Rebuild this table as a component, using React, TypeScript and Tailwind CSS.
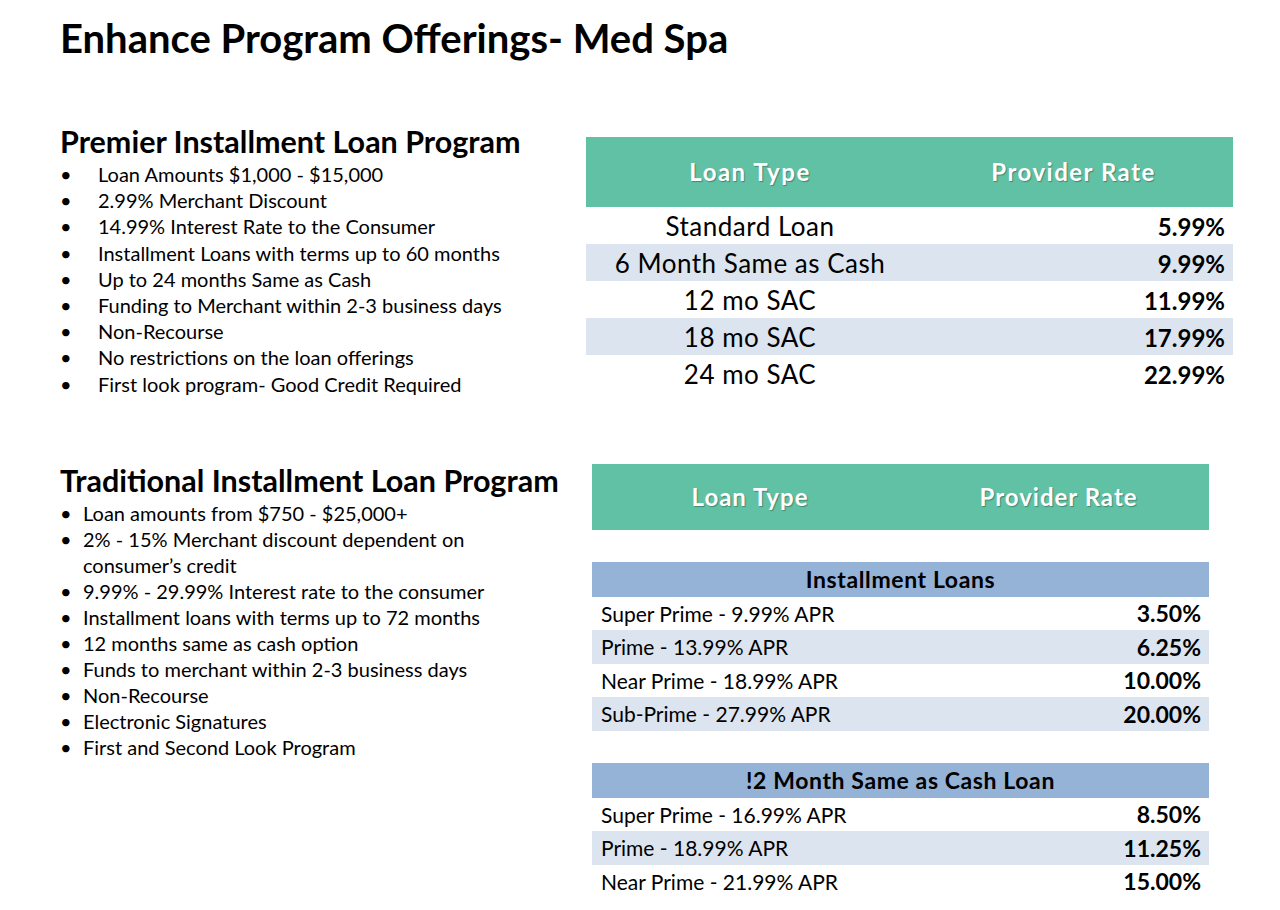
const premier = [
  "Loan Amounts $1,000 - $15,000",
  "2.99% Merchant Discount",
  "14.99% Interest Rate to the Consumer",
  "Installment Loans with terms up to 60 months",
  "Up to 24 months Same as Cash",
  "Funding to Merchant within 2-3 business days",
  "Non-Recourse",
  "No restrictions on the loan offerings",
  "First look program- Good Credit Required",
];

const traditional = [
  "Loan amounts from $750 - $25,000+",
  "2% - 15% Merchant discount dependent on consumer\u2019s credit",
  "9.99% - 29.99% Interest rate to the consumer",
  "Installment loans with terms up to 72 months",
  "12 months same as cash option",
  "Funds to merchant within 2-3 business days",
  "Non-Recourse",
  "Electronic Signatures",
  "First and Second Look Program",
];

const premierRates = [
  ["Standard Loan", "5.99%"],
  ["6 Month Same as Cash", "9.99%"],
  ["12 mo SAC", "11.99%"],
  ["18 mo SAC", "17.99%"],
  ["24 mo SAC", "22.99%"],
];

const installment = [
  ["Super Prime - 9.99% APR", "3.50%"],
  ["Prime - 13.99% APR", "6.25%"],
  ["Near Prime - 18.99% APR", "10.00%"],
  ["Sub-Prime - 27.99% APR", "20.00%"],
];

const sameAsCash = [
  ["Super Prime - 16.99% APR", "8.50%"],
  ["Prime - 18.99% APR", "11.25%"],
  ["Near Prime - 21.99% APR", "15.00%"],
];

const headShadow = "[text-shadow:1px_1px_1px_rgba(0,0,0,0.3)]";

function SubTable({ title, rows }: { title: string; rows: string[][] }) {
  return (
    <div>
      <div className="h-[35px] bg-[#95b3d7] flex items-center justify-center text-[23px] tracking-[0.6px] font-bold text-black">
        {title}
      </div>
      {rows.map((r, i) => (
        <div
          key={r[0]}
          className={`h-[33.5px] flex items-center justify-between pl-[9px] pr-[8px] text-[21px] ${
            i % 2 === 1 ? "bg-[#dce4ef]" : "bg-white"
          }`}
        >
          <span>{r[0]}</span>
          <span className="font-bold text-[23px]">{r[1]}</span>
        </div>
      ))}
    </div>
  );
}

export default function App() {
  return (
    <div className="w-[1280px] h-[910px] bg-white text-black font-['Lato','Open_Sans',sans-serif] overflow-hidden">
      <h1 className="pl-[60px] pt-[14px] text-[40px] leading-[48px] font-bold">
        Enhance Program Offerings- Med Spa
      </h1>

      {/* premier */}
      <div className="flex mt-[63px]">
        <div className="w-[586px] shrink-0 pl-[60px]">
          <h2 className="text-[30.5px] leading-[32px] font-bold">Premier Installment Loan Program</h2>
          <ul className="mt-[4px] text-[20px] leading-[26.2px]">
            {premier.map((t) => (
              <li key={t} className="flex">
                <span className="w-[38px] shrink-0">•</span>
                <span>{t}</span>
              </li>
            ))}
          </ul>
        </div>
        <div className="w-[647px] mt-[12px]">
          <div className="h-[70px] bg-[#60c1a4] grid grid-cols-[328px_1fr] items-center text-white font-bold text-[24px] tracking-[1.5px]">
            <div className={`text-center ${headShadow}`}>Loan Type</div>
            <div className={`text-center ${headShadow}`}>Provider Rate</div>
          </div>
          {premierRates.map((r, i) => (
            <div
              key={r[0]}
              className={`h-[37px] grid grid-cols-[328px_1fr] items-center ${
                i % 2 === 1 ? "bg-[#dce4ef]" : "bg-white"
              }`}
            >
              <div className="text-center text-[26px] tracking-[0.5px]">{r[0]}</div>
              <div className="text-right pr-[8px] font-bold text-[24px]">{r[1]}</div>
            </div>
          ))}
        </div>
      </div>

      {/* traditional */}
      <div className="flex mt-[67px]">
        <div className="w-[592px] shrink-0 pl-[60px]">
          <h2 className="text-[30.5px] leading-[32px] font-bold">Traditional Installment Loan Program</h2>
          <ul className="mt-[4px] text-[20px] leading-[26px]">
            {traditional.map((t) => (
              <li key={t} className="flex">
                <span className="w-[23px] shrink-0">•</span>
                <span className="w-[450px]">{t}</span>
              </li>
            ))}
          </ul>
        </div>
        <div className="w-[617px]">
          <div className="h-[66px] bg-[#60c1a4] grid grid-cols-[316px_1fr] items-center text-white font-bold text-[24px] tracking-[1px]">
            <div className={`text-center ${headShadow}`}>Loan Type</div>
            <div className={`text-center ${headShadow}`}>Provider Rate</div>
          </div>
          <div className="mt-[32px]">
            <SubTable title="Installment Loans" rows={installment} />
          </div>
          <div className="mt-[32px]">
            <SubTable title="!2 Month Same as Cash Loan" rows={sameAsCash} />
          </div>
        </div>
      </div>
    </div>
  );
}
